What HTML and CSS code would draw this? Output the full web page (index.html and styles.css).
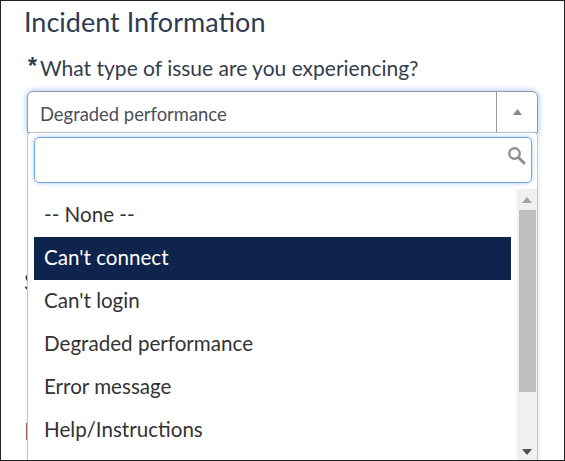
FILE: index.html
```html
<!DOCTYPE html>
<html lang="en">
<head>
    <meta charset="UTF-8">
    <meta name="viewport" content="width=device-width, initial-scale=1.0">
    <title>Incident Information</title>
    <link rel="stylesheet" href="styles.css">
</head>
<body>
    <div class="window">
        <h2 class="section-title">Incident Information</h2>
        <div class="form-group">
            <label class="form-label"><span class="required">*</span>What type of issue are you experiencing?</label>
            <div class="select-box">
                <div class="select-value">Degraded performance</div>
                <div class="select-arrow">
                    <svg width="9" height="6" viewBox="0 0 9 6"><path d="M4.5 0 L9 6 L0 6 Z" fill="#8a8a8a"/></svg>
                </div>
            </div>
            <div class="dropdown">
                <div class="search-box">
                    <svg class="search-icon" width="19" height="19" viewBox="0 0 19 19">
                        <circle cx="7.5" cy="7.5" r="5.2" fill="none" stroke="#8f8f8f" stroke-width="2.4"/>
                        <path d="M11.5 11.5 L17 17" stroke="#8f8f8f" stroke-width="3" stroke-linecap="round"/>
                    </svg>
                </div>
                <div class="list-wrap">
                    <ul class="option-list">
                        <li>-- None --</li>
                        <li class="selected">Can't connect</li>
                        <li>Can't login</li>
                        <li>Degraded performance</li>
                        <li>Error message</li>
                        <li>Help/Instructions</li>
                    </ul>
                    <div class="scrollbar">
                        <div class="scroll-btn">
                            <svg width="10" height="6" viewBox="0 0 10 6"><path d="M5 0 L10 6 L0 6 Z" fill="#a3a3a3"/></svg>
                        </div>
                        <div class="scroll-track"><div class="scroll-thumb"></div></div>
                        <div class="scroll-btn">
                            <svg width="10" height="6" viewBox="0 0 10 6"><path d="M0 0 L10 0 L5 6 Z" fill="#505050"/></svg>
                        </div>
                    </div>
                </div>
            </div>
        </div>
        <div class="hidden-label first">S</div>
        <div class="hidden-label second">D</div>
    </div>
</body>
</html>
```

FILE: styles.css
```css
* {
    box-sizing: border-box;
}
html, body {
    margin: 0;
    padding: 0;
    height: 100%;
    background-color: #fff;
    overflow: hidden;
}
body {
    font-family: Lato, "Open Sans", sans-serif;
    color: #2f3a4f;
}
.window {
    position: relative;
    height: 461px;
    padding: 6px 26px 0 23px;
    border: 1px solid #222;
    overflow: hidden;
}
.section-title {
    margin: 0;
    font-size: 27px;
    font-weight: 400;
    line-height: 30px;
    color: #2e3b52;
}
.form-group {
    position: relative;
    margin-top: 18px;
    margin-left: 3px;
}
.form-label {
    display: block;
    height: 36px;
    font-size: 21px;
    line-height: 26px;
    color: #333d4e;
}
.required {
    font-family: "Liberation Sans", sans-serif;
    font-size: 23px;
    font-weight: 700;
    line-height: 20px;
    margin-right: 3px;
    margin-left: 1px;
    vertical-align: 2px;
}
.select-box {
    display: flex;
    height: 42px;
    border: 1px solid #9a9a9a;
    border-radius: 6px 6px 0 0;
    box-shadow: 0 0 6px rgba(80, 150, 235, 0.65);
    background: #fff;
}
.select-value {
    flex: 1;
    padding-left: 12px;
    font-size: 18.4px;
    line-height: 44px;
    color: #4a4f58;
}
.select-arrow {
    display: flex;
    align-items: center;
    justify-content: center;
    width: 41px;
    border-left: 1px solid #9a9a9a;
}
.dropdown {
    position: absolute;
    top: 77px;
    left: 0;
    right: 0;
    height: 340px;
    padding: 4px 5px 0 6px;
    background: #fff;
    border: 1px solid #c4c4c4;
    border-radius: 4px 4px 0 0;
    box-shadow: 1px 0 4px rgba(0, 0, 0, 0.08);
}
.search-box {
    position: relative;
    height: 46px;
    border: 1px solid #6fa8e8;
    border-radius: 5px;
    box-shadow: 0 0 4px rgba(80, 150, 235, 0.5);
}
.search-icon {
    position: absolute;
    top: 8px;
    right: 5px;
}
.list-wrap {
    display: flex;
    height: 273px;
    margin-top: 6px;
    margin-right: -5px;
}
.option-list {
    flex: 1;
    margin: 0;
    padding: 5px 6px 0 0;
    list-style: none;
}
.option-list li {
    height: 43px;
    padding-left: 10px;
    font-size: 20.6px;
    line-height: 40px;
    color: #333;
}
.option-list li.selected {
    background-color: #0e244d;
    color: #fff;
}
.scrollbar {
    display: flex;
    flex-direction: column;
    width: 20px;
    background: #f0f0f0;
}
.scroll-btn {
    display: flex;
    align-items: center;
    justify-content: center;
    height: 21px;
    flex-shrink: 0;
}
.scroll-track {
    flex: 1;
}
.scroll-thumb {
    width: 17px;
    height: 182px;
    margin-left: 2px;
    background: #bfbfbf;
}
.hidden-label {
    font-size: 24px;
    color: #2e3b52;
    line-height: 30px;
}
.hidden-label.first {
    margin-top: 133px;
}
.hidden-label.second {
    margin-top: 120px;
}
```
